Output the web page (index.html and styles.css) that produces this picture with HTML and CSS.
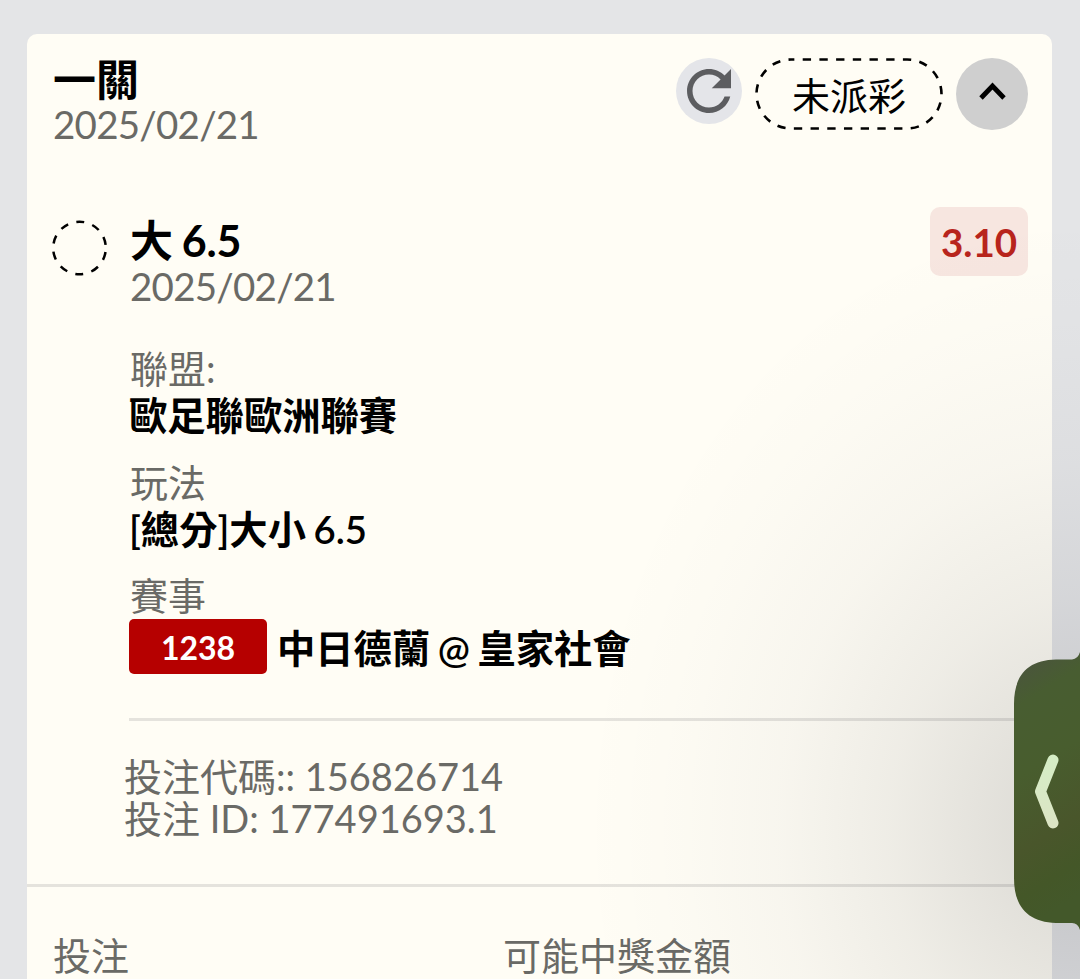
FILE: index.html
```html
<!DOCTYPE html>
<html lang="zh-Hant">
<head>
	<meta charset="utf-8">
	<title>投注</title>
	<link rel="stylesheet" href="styles.css">
</head>
<body>
	<div class="ticket">
		<div class="ticket-header">
			<div class="ticket-title">
				<div class="title">一關</div>
				<div class="date">2025/02/21</div>
			</div>
			<button class="refresh">
				<svg width="66" height="66" viewBox="0 0 24 24">
					<path fill="#5c5d60" d="M17.65 6.35C16.2 4.9 14.21 4 12 4c-4.42 0-7.990 3.580-7.990 8s3.570 8 7.990 8c3.730 0 6.840-2.550 7.730-6h-2.080c-.82 2.330-3.040 4-5.650 4-3.310 0-6-2.690-6-6s2.690-6 6-6c1.660 0 3.140.69 4.220 1.780L13 11h7V4l-2.350 2.350z"/>
				</svg>
			</button>
			<div class="status">
				<svg class="status-border" width="188" height="72" viewBox="0 0 188 72">
					<rect x="1.500" y="1.500" width="185" height="69" rx="34.500" fill="none" stroke="#000" stroke-width="2.600" stroke-dasharray="8.350 8.350" stroke-dashoffset="5"/>
				</svg>
				未派彩
			</div>
			<button class="collapse">
				<svg width="72" height="72" viewBox="0 0 72 72">
					<path d="M25 40L36.500 28L48 40" fill="none" stroke="#000" stroke-width="4.800"/>
				</svg>
			</button>
		</div>

		<div class="bet">
			<svg class="pending" width="56" height="56" viewBox="0 0 56 56">
				<circle cx="27.500" cy="28" r="26.300" fill="none" stroke="#000" stroke-width="2.500" stroke-dasharray="8.100 8.424" stroke-dashoffset="-4.200"/>
			</svg>
			<div class="bet-body">
				<div class="bet-head">
					<div>
						<div class="title">大 6.5</div>
						<div class="date">2025/02/21</div>
					</div>
					<span class="odds">3.10</span>
				</div>
				<dl class="details">
					<dt>聯盟:</dt>
					<dd>歐足聯歐洲聯賽</dd>
					<dt>玩法</dt>
					<dd>[總分]大小 6.5</dd>
					<dt>賽事</dt>
					<dd class="match"><span class="match-id">1238</span><span class="teams">中日德蘭 @ 皇家社會</span></dd>
				</dl>
				<div class="codes">
					<div>投注代碼:: 156826714</div>
					<div>投注 ID: 177491693.1</div>
				</div>
			</div>
		</div>

		<div class="summary">
			<div>投注</div>
			<div>可能中獎金額</div>
		</div>
	</div>

	<!-- edge panel handle and the shade around it -->
	<div class="edge-shade"></div>
	<svg class="edge-handle" width="66" height="288" viewBox="0 0 66 288">
		<defs>
			<linearGradient id="handle" x1="0" y1="0" x2="0.150" y2="1">
				<stop offset="0" stop-color="#4c5549"/>
				<stop offset="0.080" stop-color="#4a563b"/>
				<stop offset="0.200" stop-color="#485d31"/>
				<stop offset="0.450" stop-color="#485d2e"/>
				<stop offset="0.720" stop-color="#49562b"/>
				<stop offset="0.880" stop-color="#445728"/>
				<stop offset="1" stop-color="#43582a"/>
			</linearGradient>
			<linearGradient id="arrow" x1="0" y1="0" x2="0" y2="1">
				<stop offset="0" stop-color="#d5edc5"/>
				<stop offset="1" stop-color="#dce5c5"/>
			</linearGradient>
		</defs>
		<path d="M66 6Q64 13 58 13.500H42C14 14 0 29 0 58V232C0 261 14 276 42 277H58Q64 277 66 284z" fill="url(#handle)"/>
		<path d="M39 114L26.500 145.500L39 177" fill="none" stroke="url(#arrow)" stroke-width="11" stroke-linecap="round" stroke-linejoin="round"/>
	</svg>
</body>
</html>
```

FILE: styles.css
```css
* {
	box-sizing: border-box;
}
body {
	margin: 0;
	height: 979px;
	overflow: hidden;
	padding: 34px 28px 0 27px;
	background-color: #e4e5e7;
	color: #000;
	font-family: Lato, "Noto Sans CJK TC", sans-serif;
	font-size: 38px;
	line-height: 46px;
}
button {
	padding: 0;
	border: none;
	border-radius: 50%;
	cursor: pointer;
}
svg {
	display: block;
}

.ticket {
	height: 945px;
	background-color: #fffdf5;
	border-radius: 10px 10px 0 0;
}
.ticket-header {
	display: flex;
	align-items: flex-start;
	height: 163px;
	padding: 24px 24px 0 26px;
}
.ticket-title {
	flex: 1;
}
.title {
	font-size: 43px;
	font-weight: 700;
	line-height: 43px;
}
.date {
	color: #6a6a66;
	font-size: 38.5px;
	letter-spacing: -0.75px;
}
.refresh {
	width: 66px;
	height: 66px;
	background-color: #e4e5e9;
}
.status {
	position: relative;
	width: 188px;
	height: 72px;
	margin: 0 13px;
	line-height: 75px;
	text-align: center;
}
.status-border {
	position: absolute;
	top: 0;
	left: 0;
}
.collapse {
	width: 72px;
	height: 72px;
	background-color: #cfcfcf;
}

.bet {
	display: flex;
	align-items: flex-start;
	height: 690px;
	padding: 10px 0 0 25px;
	border-bottom: 3px solid #e5e3dd;
}
.pending {
	margin: 13px 21px 0 0;
}
.bet-body {
	flex: 1;
}
.bet-head {
	display: flex;
	justify-content: space-between;
	align-items: flex-start;
	padding: 0 24px 0 1px;
}
.bet-head .title {
	padding-top: 12px;
	margin-bottom: 1px;
	letter-spacing: -0.3px;
	word-spacing: -1px;
}
.odds {
	width: 98px;
	height: 69px;
	border-radius: 10px;
	background-color: #f7e6e0;
	color: #b8241c;
	font-size: 38.5px;
	font-weight: 700;
	line-height: 71px;
	text-align: center;
}
.details {
	height: 412px;
	margin: 0;
	padding-top: 36px;
	border-bottom: 3px solid #e5e3dd;
}
.details dt {
	padding-left: 1px;
	color: #6a6a66;
}
.details dd {
	margin: 0 0 19.5px;
	padding-top: 1px;
	font-size: 38.3px;
	font-weight: 600;
	line-height: 47px;
	word-spacing: -2px;
}
.details .match {
	display: flex;
	align-items: center;
	gap: 10px;
}
.match-id {
	width: 138px;
	height: 55px;
	border-radius: 5px;
	background-color: #b60000;
	color: #fff;
	font-size: 32px;
	font-weight: 700;
	line-height: 57px;
	text-align: center;
}
.teams {
	padding-top: 3px;
}
.codes {
	margin-left: -5px;
	padding-top: 34px;
	color: #6a6a66;
	line-height: 42px;
}

.summary {
	display: grid;
	grid-template-columns: 450px 1fr;
	padding: 45px 26px 0;
	color: #6a6a66;
}

.edge-shade {
	position: absolute;
	top: 0;
	right: 0;
	width: 560px;
	height: 979px;
	pointer-events: none;
	background: radial-gradient(ellipse 500px 620px at 100% 830px, rgba(20, 20, 30, 0.15), rgba(20, 20, 30, 0.125) 15%, rgba(20, 20, 30, 0.07) 38%, rgba(20, 20, 30, 0.03) 60%, rgba(20, 20, 30, 0.01) 80%, rgba(20, 20, 30, 0));
}
.edge-handle {
	position: absolute;
	top: 646px;
	right: 0;
}
```
